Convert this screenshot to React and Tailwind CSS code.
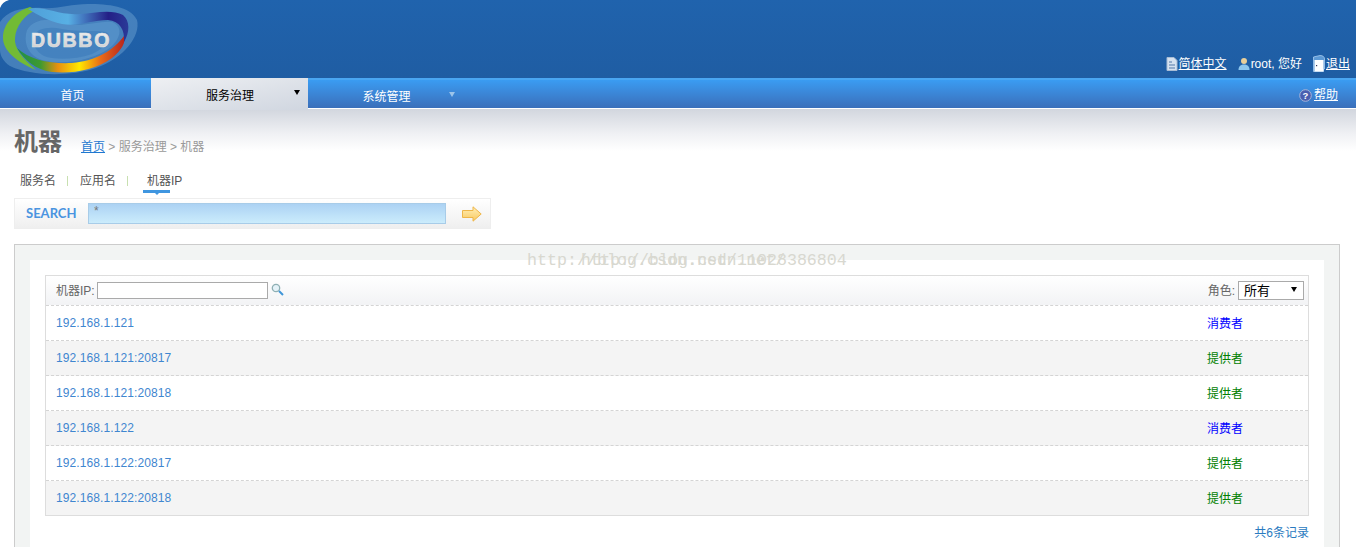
const SANS = "font-['Liberation_Sans','Noto_Sans_CJK_SC',sans-serif]";

function Logo() {
  return (
    <svg width="142" height="78" viewBox="0 0 142 78" className="absolute left-0 top-0">
      <defs>
        <linearGradient id="top" x1="0" y1="0" x2="1" y2="0">
          <stop offset="0" stopColor="#4f9fd8" />
          <stop offset="0.4" stopColor="#58b0e4" />
          <stop offset="0.62" stopColor="#3a5fb0" />
          <stop offset="0.8" stopColor="#241f86" />
          <stop offset="1" stopColor="#2a3a98" />
        </linearGradient>
        <linearGradient id="bot" x1="0" y1="0" x2="1" y2="0">
          <stop offset="0" stopColor="#1f8f48" />
          <stop offset="0.22" stopColor="#3f9a30" />
          <stop offset="0.38" stopColor="#e89010" />
          <stop offset="0.58" stopColor="#ffe800" />
          <stop offset="0.78" stopColor="#e86a18" />
          <stop offset="1" stopColor="#b8261e" />
        </linearGradient>
        <linearGradient id="txt" x1="0" y1="0" x2="0" y2="1">
          <stop offset="0" stopColor="#f4f4f4" />
          <stop offset="1" stopColor="#c8cacc" />
        </linearGradient>
      </defs>
      <path d="M0 8 Q2 2 9 0 L0 0Z" fill="#fff" />
      <path d="M0 22 C8 10 24 7 42 8 C60 9 70 4 88 4 C108 4 130 6 137 20 C141 36 124 58 96 68 C70 77 30 76 10 66 C4 62 0 56 0 50Z" fill="#6a9fd0" opacity="0.5" />
      <path d="M26 34 C28 20 48 17 62 22 C80 29 100 20 112 22 C122 26 122 36 112 46 C96 60 62 66 42 60 C30 56 24 46 26 34Z" fill="#5a97cc" opacity="0.65" />
      <path d="M34 36 C36 28 50 26 62 29 C78 32 96 30 106 32 C114 36 106 48 92 54 C74 60 54 60 44 56 C36 52 32 44 34 36Z" fill="#2a6db2" opacity="0.35" />
      <path d="M30 7 C14 12 3 24 3 38 C3 50 16 62 36 70 C22 58 14 48 15 38 C16 26 24 15 36 10Z" fill="#72bb35" />
      <path d="M17 48 C30 60 50 64 72 63 C96 61 114 50 124 36 C126 42 122 50 112 58 C96 70 72 74 52 72 C36 70 24 60 17 48Z" fill="url(#bot)" />
      <path d="M28 9 C44 5 58 16 80 14 C94 13 112 9 123 15 C130 21 130 32 124 42 C125 30 120 21 108 20 C92 20 78 27 62 24 C48 21 38 15 28 9Z" fill="url(#top)" />
      <text x="31" y="47" fontFamily="'Liberation Sans',sans-serif" fontWeight="700" fontSize="19.5" letterSpacing="1.7" stroke="#dfe0e2" strokeWidth="0.7" fill="url(#txt)">DUBBO</text>
    </svg>
  );
}

const PageIcon = () => (
  <svg width="12" height="14" viewBox="0 0 12 14" className="shrink-0">
    <path d="M1 0.5H8L11 3.5V13.5H1Z" fill="#d6e2f0" stroke="#a8bcd4" />
    <path d="M3 5H6M3 8H9M3 11H9" stroke="#7f9cc0" strokeWidth="1.4" />
  </svg>
);
const UserIcon = () => (
  <svg width="12" height="13" viewBox="0 0 12 13" className="shrink-0">
    <circle cx="6" cy="4" r="3" fill="#e8cf9a" />
    <path d="M0.5 13C0.5 9 3 7.5 6 7.5S11.5 9 11.5 13Z" fill="#8cc6ee" />
  </svg>
);
const DoorIcon = () => (
  <svg width="12" height="17" viewBox="0 0 12 17" className="shrink-0">
    <path d="M0.5 2L7 0.5C10 0.5 11.5 2 11.5 4V14H10.5V16.5H0.5Z" fill="#5d9ad6" stroke="#a8cdf0" strokeWidth="0.8" />
    <rect x="1.5" y="5" width="9" height="11.5" fill="#fff" />
    <rect x="3" y="10" width="1.2" height="1.2" fill="#335" />
  </svg>
);
const HelpIcon = () => (
  <svg width="13" height="13" viewBox="0 0 13 13" className="shrink-0">
    <circle cx="6.5" cy="6.5" r="5.8" fill="#4a5eb0" stroke="#a8b4d8" strokeWidth="1" />
    <text x="6.5" y="10" textAnchor="middle" fontSize="9.5" fontWeight="700" fontFamily="'Liberation Sans',sans-serif" fill="#fff">?</text>
  </svg>
);
const SearchIcon = () => (
  <svg width="13" height="13" viewBox="0 0 13 13" className="shrink-0">
    <circle cx="5" cy="5" r="3.7" fill="#e4f2f8" stroke="#8fb0b4" strokeWidth="1.3" />
    <path d="M8 8L12 12" stroke="#3f96d8" strokeWidth="2" />
  </svg>
);
const GoArrow = () => (
  <svg width="20" height="16" viewBox="0 0 20 16" className="shrink-0">
    <defs>
      <linearGradient id="go" x1="0" y1="0" x2="0" y2="1">
        <stop offset="0" stopColor="#fff0b8" />
        <stop offset="1" stopColor="#f8c860" />
      </linearGradient>
    </defs>
    <path d="M0.5 4.5H11V0.8L19.2 8L11 15.2V11.5H0.5Z" fill="url(#go)" stroke="#eeb64a" />
  </svg>
);

const rows = [
  ["192.168.1.121", "消费者", "text-[#0000ff]"],
  ["192.168.1.121:20817", "提供者", "text-[#008000]"],
  ["192.168.1.121:20818", "提供者", "text-[#008000]"],
  ["192.168.1.122", "消费者", "text-[#0000ff]"],
  ["192.168.1.122:20817", "提供者", "text-[#008000]"],
  ["192.168.1.122:20818", "提供者", "text-[#008000]"],
];

export default function App() {
  return (
    <div className={`relative h-[547px] w-[1356px] overflow-hidden bg-white text-[12px] leading-none text-[#666] ${SANS}`}>
      <header className="relative flex h-[78px] items-end justify-end bg-gradient-to-b from-[#2063ad] to-[#1f5da3] pb-[6px] pr-[6px] text-white">
        <Logo />
        <div className="flex items-center">
          <PageIcon />
          <a className="ml-px underline">简体中文</a>
          <span className="ml-[11px]"><UserIcon /></span>
          <span className="ml-px">root, 您好</span>
          <span className="ml-[11px]"><DoorIcon /></span>
          <a className="ml-px underline">退出</a>
        </div>
      </header>

      <nav className="relative flex h-[31px] border-b border-t-2 border-white border-t-[#4aa6f2] bg-gradient-to-b from-[#3a9cf2] to-[#3a6fba] text-white">
        <a className="flex w-[151px] items-center justify-center pr-[6px] pt-[4px]">首页</a>
        <a className="relative -mb-[1px] -mt-[2px] flex h-[32px] w-[157px] items-center justify-center bg-gradient-to-br from-[#eef0f3] to-[#d0d6e0] pl-px pt-[4px] text-black">
          服务治理
          <span className="absolute left-[143px] top-[12px] h-0 w-0 border-x-[3px] border-t-[5px] border-x-transparent border-t-black" />
        </a>
        <a className="relative flex w-[157px] items-center justify-center pt-[5px]">
          系统管理
          <span className="absolute left-[141px] top-[12px] h-0 w-0 border-x-[3px] border-t-[5px] border-x-transparent border-t-[#9cc4ea]" />
        </a>
        <div className="ml-auto flex items-center gap-[2px] pr-[18px] pt-[2px]">
          <HelpIcon />
          <a className="underline">帮助</a>
        </div>
      </nav>

      <main className="bg-[linear-gradient(to_bottom,#d2d6de_0px,#f0f1f4_25px,#ffffff_42px)] pl-[14px] pr-[16px]">
        <div className="flex h-[65px] items-end pb-[20px]">
          <h1 className="w-[67px] text-[24px] font-bold leading-[24px] text-[#666]">机器</h1>
          <div className="pb-px text-[#999]">
            <a className="text-[#1f78d0] underline">首页</a> &gt; 服务治理 &gt; 机器
          </div>
        </div>

        <div className="flex h-[24px] items-start pl-[6px] pt-[1px] text-[#555]">
          <span className="w-[36px]">服务名</span>
          <span className="ml-[11px] mt-px h-[10px] w-px bg-[#c8e0b0]" />
          <span className="ml-[12px] w-[36px]">应用名</span>
          <span className="ml-[11px] mt-px h-[10px] w-px bg-[#c8e0b0]" />
          <span className="relative ml-[19px]">
            机器IP
            <span className="absolute -left-[4px] top-[15px] h-[3px] w-[27px] bg-[#3f96e0]" />
            <span className="absolute left-[8px] top-[18px] h-0 w-0 border-x-[2px] border-t-[2px] border-x-transparent border-t-[#3f96e0]" />
          </span>
        </div>

        <div className="flex h-[31px] w-[477px] items-center border border-[#eee] bg-gradient-to-b from-white to-[#efefef]">
          <span className="ml-[11px] w-[62px] font-['Lato',sans-serif] text-[13px] font-bold text-[#4a94e0]">SEARCH</span>
          <input
            readOnly
            value="*"
            className="h-[21px] w-[358px] border border-[#a8cce8] bg-gradient-to-b from-[#acd2f3] to-[#cbecfc] px-[5px] pb-[6px] text-[12px] text-[#777] outline-none"
          />
          <span className="ml-[16px]"><GoArrow /></span>
        </div>

        <section className="mt-[15px] border border-[#ccc] bg-[#f2f4f3] p-[15px]">
          <div className="bg-white p-[15px]">
            <div className="border border-[#ddd]">
              <div className="flex h-[30px] items-center border-b border-dashed border-[#d4d4d4] bg-gradient-to-b from-white to-[#f2f3f5] pl-[10px] pr-[4px]">
                <span>机器IP:</span>
                <input className="ml-[2px] h-[17px] w-[171px] border border-[#aaa] bg-white outline-none" />
                <span className="mb-[3px] ml-[3px]"><SearchIcon /></span>
                <span className="ml-auto">角色:</span>
                <div className="relative ml-[3px] flex h-[19px] w-[66px] items-center border border-[#aaa] bg-white pl-[5px] text-[13px] text-black">
                  所有
                  <span className="absolute right-[6px] top-[5px] h-0 w-0 border-x-[3px] border-t-[5px] border-x-transparent border-t-black" />
                </div>
              </div>
              {rows.map(([ip, role, color], i) => (
                <div
                  key={ip}
                  className={`flex items-center pl-[10px] ${i % 2 ? "bg-[#f4f4f4]" : "bg-white"} ${i < 5 ? "h-[35px] border-b border-dashed border-[#d4d4d4]" : "h-[34px]"}`}
                >
                  <a className="tracking-[0.1px] text-[#3f86d0]">{ip}</a>
                  <span className={`ml-auto w-[101px] pt-[2px] ${color}`}>{role}</span>
                </div>
              ))}
            </div>
            <div className="pt-[11px] text-right text-[#2a7ac0]">共6条记录</div>
          </div>
        </section>
      </main>

      <div className="pointer-events-none absolute left-[527px] top-[252px] whitespace-pre font-['Liberation_Mono',monospace] text-[16.67px] leading-[18px] text-[#d8d8d0]">
        http://blog.csdn.net/11028386804
      </div>
      <div className="pointer-events-none absolute left-[581px] top-[252px] whitespace-pre font-['Liberation_Mono',monospace] text-[16.2px] leading-[18px] text-[#d8d8d0]">
        http://blog.csdn.net/
      </div>
    </div>
  );
}
